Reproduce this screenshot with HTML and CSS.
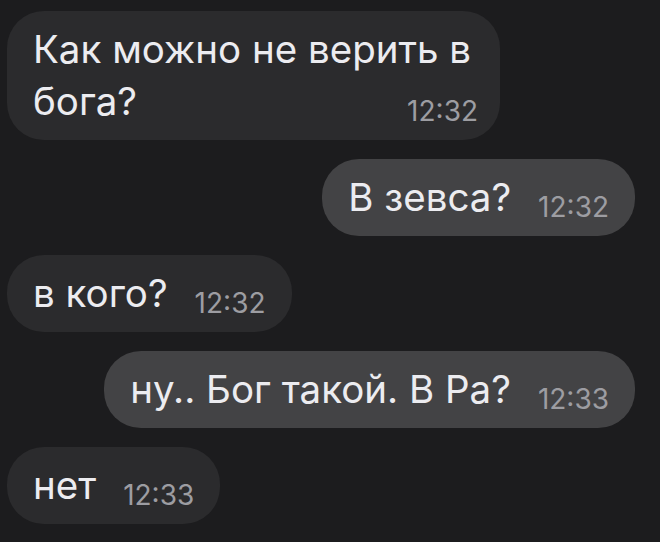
FILE: index.html
```html
<!DOCTYPE html>
<html>
<head>
    <link rel="stylesheet" href="styles.css">
</head>
<body>
    <div class="chat">
        <div class="msg in wide">Как можно не верить в бога? <span class="time">12:32</span></div>
        <div class="msg out">В зевса? <span class="time">12:32</span></div>
        <div class="msg in">в кого? <span class="time">12:32</span></div>
        <div class="msg out">ну.. Бог такой. В Ра? <span class="time">12:33</span></div>
        <div class="msg in">нет <span class="time">12:33</span></div>
    </div>
</body>
</html>
```
FILE: styles.css
```css
body {
    margin: 0;
    background: #1c1c1e;
    font-family: Inter, "Noto Sans", sans-serif;
    color: #ececf0;
}
.chat {
    display: flex;
    flex-direction: column;
    align-items: flex-start;
    gap: 19px;
    padding: 11px 25px 0 7px;
}
.msg {
    display: inline-block;
    box-sizing: border-box;
    padding: 12px 26px 13px 26px;
    border-radius: 37px;
    font-size: 38.5px;
    line-height: 52px;
    background: #2b2b2d;
}
.msg.out {
    align-self: flex-end;
    background: #434345;
}
.msg.wide {
    width: 493px;
    padding-right: 22px;
}
.time {
    float: right;
    margin: 20px 0 0 27px;
    font-size: 28px;
    line-height: 32px;
    color: #9d9da2;
}
```
